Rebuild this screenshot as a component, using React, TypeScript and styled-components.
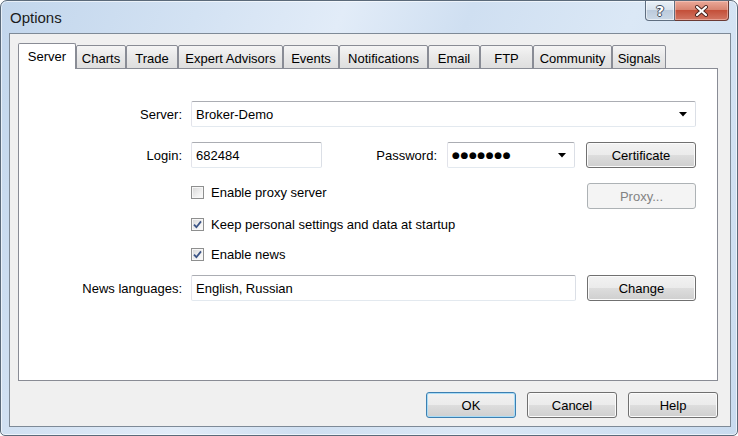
import React from "react";
import styled, { createGlobalStyle } from "styled-components";

const GlobalStyle = createGlobalStyle`
  html, body {
    margin: 0;
    padding: 0;
    background: #ffffff;
  }
  body {
    width: 738px;
    height: 436px;
    overflow: hidden;
    font-family: "Liberation Sans", Arial, sans-serif;
    font-size: 13px;
    color: #000;
  }
`;

const Window = styled.div`
  width: 738px;
  height: 436px;
  box-sizing: border-box;
  border: 1px solid #5b6a7a;
  border-radius: 7px 7px 5px 5px;
  background: linear-gradient(
    112deg,
    #c2d6ec 0%,
    #d3e2f3 22%,
    #e2ecf8 38%,
    #cfdff1 52%,
    #dbe8f6 70%,
    #c9dbef 100%
  );
  box-shadow: inset 0 0 0 1px rgba(255, 255, 255, 0.6);
  display: flex;
  flex-direction: column;
  overflow: hidden;
`;

const TitleBar = styled.div`
  height: 32px;
  display: flex;
  justify-content: space-between;
  padding-left: 9px;
`;

const Title = styled.div`
  font-size: 15px;
  color: #1b1b1b;
  line-height: 32px;
  padding-top: 1px;
`;

const CaptionButtons = styled.div`
  display: flex;
  align-self: flex-start;
  margin-right: 8px;
`;

const HelpCaption = styled.div`
  width: 30px;
  height: 20px;
  box-sizing: border-box;
  border: 1px solid #5f6e80;
  border-top: none;
  border-radius: 0 0 0 4px;
  background: linear-gradient(#e9f0f7 0%, #d8e2ed 45%, #bccbdc 50%, #cbd8e6 100%);
  box-shadow: inset 0 0 0 1px rgba(255, 255, 255, 0.55);
  display: flex;
  align-items: center;
  justify-content: center;
  font-family: "DejaVu Sans", sans-serif;
  font-weight: bold;
  font-size: 14px;
  color: #ffffff;
  text-shadow: 1px 0 #3f4c5c, -1px 0 #3f4c5c, 0 1px #3f4c5c, 0 -1px #3f4c5c;
`;

const CloseCaption = styled.div`
  width: 54px;
  height: 20px;
  box-sizing: border-box;
  border: 1px solid #6b3a34;
  border-left: none;
  border-top: none;
  border-radius: 0 0 4px 0;
  background: linear-gradient(#eba999 0%, #d88572 45%, #c4503a 50%, #d27663 100%);
  box-shadow: inset 0 0 0 1px rgba(255, 220, 210, 0.45);
  display: flex;
  align-items: center;
  justify-content: center;
`;

const Client = styled.div`
  flex: 1;
  margin: 0 6px 8px 8px;
  border: 1px solid #7e8a97;
  background: #f0f0f0;
  padding: 9px 12px 8px 8px;
  display: flex;
  flex-direction: column;
`;

const TabStrip = styled.div`
  height: 26px;
  display: flex;
  align-items: flex-end;
`;

const Tab = styled.div<{ $w: number; $active?: boolean }>`
  position: relative;
  z-index: ${(p) => (p.$active ? 2 : 1)};
  width: ${(p) => p.$w}px;
  height: ${(p) => (p.$active ? 26 : 24)}px;
  box-sizing: border-box;
  border: 1px solid #898c95;
  border-bottom: ${(p) => (p.$active ? "none" : "1px solid #898c95")};
  background: ${(p) =>
    p.$active ? "#ffffff" : "linear-gradient(#f5f5f5 0%, #e9e9e9 45%, #dedede 100%)"};
  display: flex;
  align-items: center;
  justify-content: center;
  padding-top: ${(p) => (p.$active ? 0 : 2)}px;
  white-space: nowrap;
  border-radius: 2px 2px 0 0;
`;

const Panel = styled.div`
  flex: 1;
  margin-top: -1px;
  background: #ffffff;
  border: 1px solid #898c95;
  padding: 32px 21px 0 0;
  display: flex;
  flex-direction: column;
`;

const Row = styled.div<{ $mt: number; $h: number }>`
  display: grid;
  grid-template-columns: 163px 1fr;
  column-gap: 9px;
  align-items: center;
  margin-top: ${(p) => p.$mt}px;
  height: ${(p) => p.$h}px;
`;

const Label = styled.label`
  text-align: right;
  white-space: nowrap;
`;

const Field = styled.div`
  display: flex;
  align-items: center;
  height: 100%;
`;

const Spread = styled(Field)`
  justify-content: space-between;
  align-items: flex-start;
`;

const Group = styled.div`
  display: flex;
  align-items: center;
`;

const TextBox = styled.div<{ $w?: number }>`
  ${(p) => (p.$w ? `width: ${p.$w}px;` : "flex: 1;")}
  height: 26px;
  box-sizing: border-box;
  border: 1px solid;
  border-color: #abadb3 #dbdfe6 #e3e9ef #e2e3ea;
  border-radius: 2px;
  background: #ffffff;
  display: flex;
  align-items: center;
  padding: 0 8px 0 4px;
  white-space: nowrap;
`;

const BoxText = styled.span`
  flex: 1;
`;

const Dots = styled.span`
  flex: 1;
  font-family: "DejaVu Sans", sans-serif;
  font-size: 9px;
  letter-spacing: 0.6px;
`;

type Variant = "normal" | "default" | "disabled";

const borderOf: Record<Variant, string> = {
  normal: "#707070",
  default: "#3c7fb1",
  disabled: "#adb2b5",
};

const glowOf: Record<Variant, string> = {
  normal: "#fbfbfb",
  default: "#a9dcf6",
  disabled: "#f4f4f4",
};

const Button = styled.div<{ $w: number; $variant?: Variant; $ml?: number }>`
  width: ${(p) => p.$w}px;
  height: 26px;
  margin-left: ${(p) => p.$ml ?? 0}px;
  box-sizing: border-box;
  border: 1px solid ${(p) => borderOf[p.$variant ?? "normal"]};
  border-radius: 3px;
  background: ${(p) =>
    p.$variant === "disabled"
      ? "#f4f4f4"
      : "linear-gradient(#f2f2f2 0%, #ebebeb 50%, #dddddd 51%, #cfcfcf 100%)"};
  box-shadow: inset 0 0 0 1px ${(p) => glowOf[p.$variant ?? "normal"]};
  color: ${(p) => (p.$variant === "disabled" ? "#838383" : "#000")};
  display: flex;
  align-items: center;
  justify-content: center;
  white-space: nowrap;
  flex-shrink: 0;
`;

const ButtonRow = styled.div`
  margin-top: 11px;
  display: flex;
  justify-content: flex-end;
  gap: 11px;
`;

const CheckLine = styled.div<{ $mt?: number }>`
  display: flex;
  align-items: center;
  gap: 7px;
  height: 16px;
  margin-top: ${(p) => p.$mt ?? 0}px;
  white-space: nowrap;
`;

const CheckSquare = styled.span`
  width: 13px;
  height: 13px;
  box-sizing: border-box;
  border: 1px solid #8e8f8f;
  background: linear-gradient(135deg, #d6d6d6 0%, #f0f0f0 60%, #fdfdfd 100%);
  box-shadow: inset 0 0 0 1px #f7f7f7;
  display: flex;
  align-items: center;
  justify-content: center;
`;

const PasswordLabel = styled.span`
  margin-right: 10px;
`;

const Arrow = () => (
  <svg width="8" height="5" viewBox="0 0 8 5">
    <polygon points="0,0 8,0 4,4.5" fill="#000" />
  </svg>
);

const Check = ({ on }: { on: boolean }) => (
  <CheckSquare>
    {on && (
      <svg width="9" height="9" viewBox="0 0 9 9">
        <path d="M1 4.6 L3.4 7.2 L8 1.4" fill="none" stroke="#3b5486" strokeWidth="1.8" />
      </svg>
    )}
  </CheckSquare>
);

const tabs = [
  { name: "Server", w: 58 },
  { name: "Charts", w: 50 },
  { name: "Trade", w: 52 },
  { name: "Expert Advisors", w: 105 },
  { name: "Events", w: 56 },
  { name: "Notifications", w: 89 },
  { name: "Email", w: 52 },
  { name: "FTP", w: 53 },
  { name: "Community", w: 79 },
  { name: "Signals", w: 54 },
];

export default function App() {
  return (
    <>
      <GlobalStyle />
      <Window>
        <TitleBar>
          <Title>Options</Title>
          <CaptionButtons>
            <HelpCaption>?</HelpCaption>
            <CloseCaption>
              <svg width="15" height="12" viewBox="0 0 15 12">
                <path d="M3 2 L12 10 M12 2 L3 10" stroke="#4a2620" strokeWidth="4" strokeLinecap="round" />
                <path d="M3 2 L12 10 M12 2 L3 10" stroke="#ffffff" strokeWidth="2.2" strokeLinecap="round" />
              </svg>
            </CloseCaption>
          </CaptionButtons>
        </TitleBar>
        <Client>
          <TabStrip>
            {tabs.map((t, i) => (
              <Tab key={t.name} $w={t.w} $active={i === 0}>
                {t.name}
              </Tab>
            ))}
          </TabStrip>
          <Panel>
            <Row $mt={0} $h={26}>
              <Label>Server:</Label>
              <TextBox>
                <BoxText>Broker-Demo</BoxText>
                <Arrow />
              </TextBox>
            </Row>
            <Row $mt={15} $h={26}>
              <Label>Login:</Label>
              <Spread>
                <TextBox $w={131}>
                  <BoxText>682484</BoxText>
                </TextBox>
                <Group>
                  <PasswordLabel>Password:</PasswordLabel>
                  <TextBox $w={128}>
                    <Dots>●●●●●●●</Dots>
                    <Arrow />
                  </TextBox>
                  <Button $w={110} $ml={11}>
                    Certificate
                  </Button>
                </Group>
              </Spread>
            </Row>
            <Row $mt={15} $h={25}>
              <span />
              <Spread>
                <CheckLine $mt={1}>
                  <Check on={false} />
                  Enable proxy server
                </CheckLine>
                <Button $w={109} $variant="disabled">
                  Proxy...
                </Button>
              </Spread>
            </Row>
            <Row $mt={8} $h={16}>
              <span />
              <CheckLine>
                <Check on />
                Keep personal settings and data at startup
              </CheckLine>
            </Row>
            <Row $mt={14} $h={16}>
              <span />
              <CheckLine>
                <Check on />
                Enable news
              </CheckLine>
            </Row>
            <Row $mt={13} $h={25}>
              <Label>News languages:</Label>
              <Field>
                <TextBox>
                  <BoxText>English, Russian</BoxText>
                </TextBox>
                <Button $w={109} $ml={11}>
                  Change
                </Button>
              </Field>
            </Row>
          </Panel>
          <ButtonRow>
            <Button $w={90} $variant="default">
              OK
            </Button>
            <Button $w={90}>Cancel</Button>
            <Button $w={90}>Help</Button>
          </ButtonRow>
        </Client>
      </Window>
    </>
  );
}
